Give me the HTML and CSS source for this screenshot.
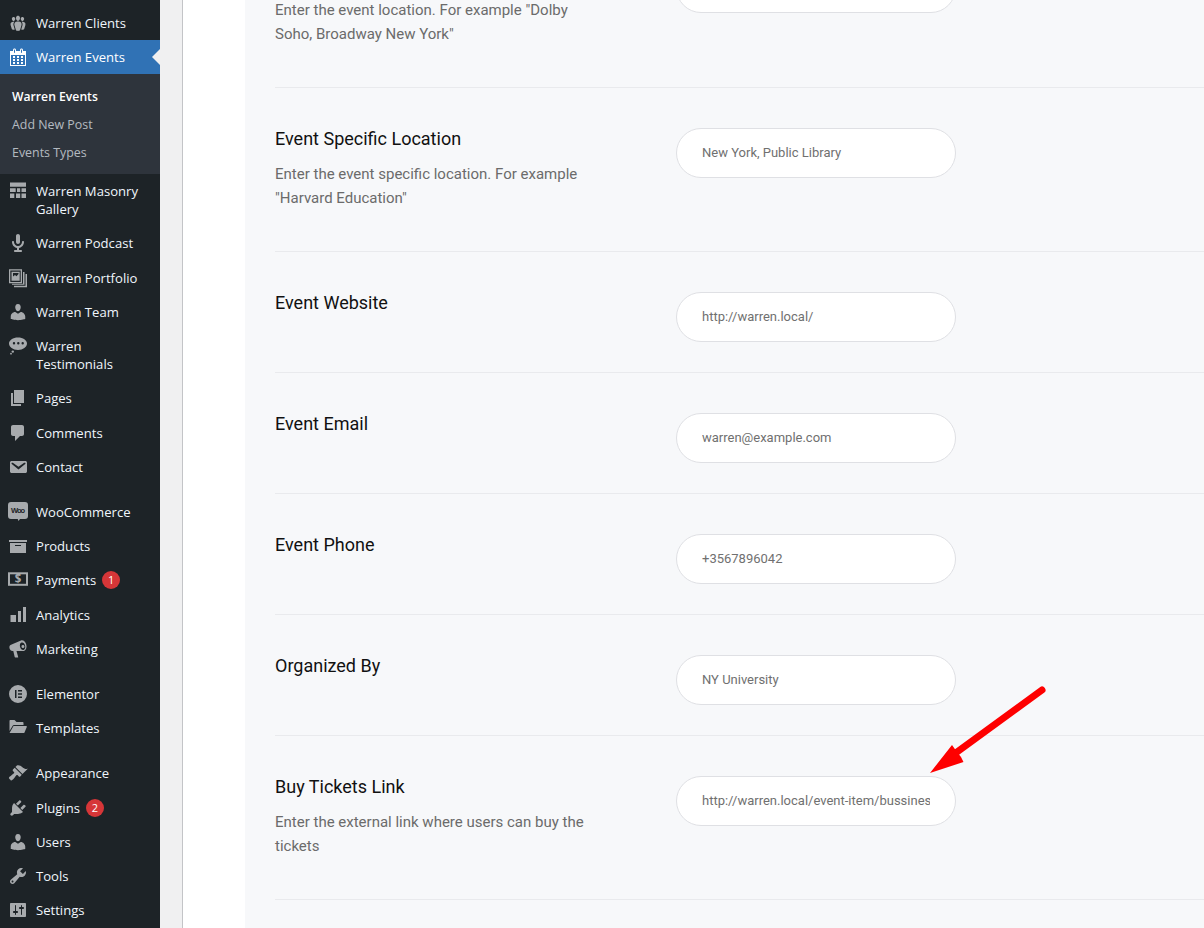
FILE: index.html
```html
<!DOCTYPE html>
<html lang="en">
<head>
<meta charset="utf-8">
<title>Warren Events</title>
<link rel="stylesheet" href="styles.css">
</head>
<body>
<div class="app">
  <nav class="sidebar">
    <ul class="menu">
      <li class="item"><svg class="ico" viewBox="0 0 20 20"><path d="M8.03 4.46c-.29 1.28.55 3.46 1.97 3.46 1.41 0 2.25-2.18 1.96-3.46-.22-.98-1.08-1.63-1.96-1.63-.89 0-1.74.65-1.97 1.63zm-4.13.9c-.25 1.08.47 2.93 1.67 2.93s1.92-1.85 1.67-2.93c-.19-.83-.92-1.39-1.67-1.39s-1.48.56-1.67 1.39zm8.86 0c-.25 1.08.47 2.93 1.66 2.93 1.2 0 1.92-1.85 1.67-2.93-.19-.83-.92-1.39-1.67-1.39-.74 0-1.47.56-1.66 1.39zm-.59 11.43l1.25-4.3C14.2 10 12.71 8.47 10 8.47c-2.72 0-4.21 1.53-3.44 4.02l1.26 4.3C8.05 17.51 9 18 10 18c.98 0 1.94-.49 2.17-1.21zm-6.1-7.63c-.49.67-.96 1.83-.42 3.59l1.12 3.79c-.34.2-.77.31-1.2.31-.85 0-1.65-.41-1.85-1.03l-1.07-3.65c-.65-2.11.61-3.4 2.92-3.4.27 0 .54.02.79.06-.1.1-.2.22-.29.33zm8.35-.39c2.31 0 3.58 1.29 2.92 3.4l-1.07 3.65c-.2.62-1 1.03-1.85 1.03-.43 0-.86-.11-1.2-.31l1.11-3.79c.55-1.76.08-2.92-.42-3.59-.09-.11-.18-.23-.28-.33.25-.04.51-.06.79-.06z"/></svg><span class="label">Warren Clients</span></li>
      <li class="item current"><svg class="ico" viewBox="0 0 20 20"><path d="M15 4h3v15H2V4h3V3c0-.41.15-.76.44-1.06.29-.29.65-.44 1.06-.44s.77.15 1.06.44c.29.3.44.65.44 1.06v1h4V3c0-.41.15-.76.44-1.06.29-.29.65-.44 1.06-.44s.77.15 1.06.44c.29.3.44.65.44 1.06v1zM6 3v2.5c0 .14.05.26.15.36.09.09.21.14.35.14s.26-.05.35-.14c.1-.1.15-.22.15-.36V3c0-.14-.05-.26-.15-.35-.09-.1-.21-.15-.35-.15s-.26.05-.35.15c-.1.09-.15.21-.15.35zm7 0v2.5c0 .14.05.26.14.36.1.09.22.14.36.14s.26-.05.36-.14c.09-.1.14-.22.14-.36V3c0-.14-.05-.26-.14-.35-.1-.1-.22-.15-.36-.15s-.26.05-.36.15c-.09.09-.14.21-.14.35zm4 15V8H3v10h14zM7 9v2H5V9h2zm2 0h2v2H9V9zm4 2V9h2v2h-2zm-6 1v2H5v-2h2zm2 0h2v2H9v-2zm4 2v-2h2v2h-2zm-6 1v2H5v-2h2zm4 2H9v-2h2v2zm4 0h-2v-2h2v2z"/></svg><span class="label">Warren Events</span></li>
      <li class="submenu">
        <a class="sub on">Warren Events</a>
        <a class="sub">Add New Post</a>
        <a class="sub">Events Types</a>
      </li>
      <li class="item"><svg class="ico" viewBox="0 0 20 20"><path d="M2 1.500h16v4.200H2zM2 7.300h5.700v3.700H2zM9 7.300h3.200v3.700H9zM13.500 7.300H18v3.700h-4.500zM2 12.500h4.300V17H2zM8 12.500h4.200V17H8zM13.500 12.500H18V17h-4.500z"/></svg><span class="label">Warren Masonry Gallery</span></li>
      <li class="item"><svg class="ico" viewBox="0 0 20 20"><path d="M12 9V3c0-1.1-.89-2-2-2-1.12 0-2 .94-2 2v6c0 1.1.9 2 2 2 1.13 0 2-.94 2-2zm4 0c0 2.97-2.16 5.43-5 5.91V17h2c.56 0 1 .45 1 1s-.44 1-1 1H7c-.55 0-1-.45-1-1s.45-1 1-1h2v-2.09C6.17 14.43 4 11.97 4 9c0-.55.45-1 1-1 .56 0 1 .45 1 1 0 2.21 1.8 4 4 4 2.21 0 4-1.79 4-4 0-.55.45-1 1-1 .56 0 1 .45 1 1z"/></svg><span class="label">Warren Podcast</span></li>
      <li class="item"><svg class="ico" viewBox="0 0 20 20"><path fill-rule="evenodd" d="M1 1.300h13v14H1zM2.300 2.600v11.400h10.400V2.600zM3.500 3.800h8.200v9H3.500zM5 5v3.500l2-1.500 1.500 1.300L10.500 6V5z"/><path d="M15 4h1.500v12.700H4v-1h11zM17.500 6H19v13.300H6v-1.500h11.500z"/></svg><span class="label">Warren Portfolio</span></li>
      <li class="item"><svg class="ico" viewBox="0 0 20 20"><path d="M10 9.250c-2.270 0-2.730-3.440-2.730-3.440C7 4.020 7.820 2 9.970 2c2.160 0 2.980 2.020 2.710 3.810 0 0-.41 3.440-2.680 3.440zm0 2.570L12.720 10c2.390 0 4.520 2.330 4.520 4.530v2.490s-3.650 1.130-7.240 1.130c-3.650 0-7.240-1.130-7.240-1.130v-2.490c0-2.250 1.940-4.480 4.470-4.480z"/></svg><span class="label">Warren Team</span></li>
      <li class="item"><svg class="ico" viewBox="0 0 20 20"><path fill-rule="evenodd" d="M10 1.500c5 0 9 2.700 9 6.100S15 14 10 14c-5 0-9-3-9-6.400S5 1.500 10 1.500zM6 6.100a1.200 1.200 0 1 0 0 2.400 1.200 1.200 0 0 0 0-2.400zm4.300 0a1.200 1.200 0 1 0 0 2.400 1.200 1.200 0 0 0 0-2.400zm4.400 0a1.200 1.200 0 1 0 0 2.400 1.200 1.200 0 0 0 0-2.400z"/><circle cx="4.800" cy="15.600" r="1.200"/><circle cx="3" cy="17.700" r=".9"/></svg><span class="label">Warren Testimonials</span></li>
      <li class="item"><svg class="ico" viewBox="0 0 20 20"><path d="M6 15V2h10v13H6zm-1 1h8v2H3V5h2v11z"/></svg><span class="label">Pages</span></li>
      <li class="item"><svg class="ico" viewBox="0 0 20 20"><path d="M5 2h9c1.100 0 2 .9 2 2v7c0 1.100-.9 2-2 2h-2l-5 5v-5H5c-1.100 0-2-.9-2-2V4c0-1.100.9-2 2-2z"/></svg><span class="label">Comments</span></li>
      <li class="item"><svg class="ico" viewBox="0 0 20 20"><path d="M3.870 4h13.250C18.370 4 19 4.590 19 5.790v8.420c0 1.190-.63 1.790-1.880 1.790H3.870c-1.250 0-1.880-.6-1.880-1.790V5.790c0-1.200.63-1.790 1.880-1.790zm6.620 8.600l6.740-5.530c.24-.2.43-.66.13-1.070-.29-.41-.82-.42-1.170-.17l-5.700 3.860L4.800 5.830c-.35-.25-.88-.24-1.170.17-.3.41-.11.87.13 1.070z"/></svg><span class="label">Contact</span></li>
      <li class="sep"></li>
      <li class="item"><svg class="ico" viewBox="0 0 20 20"><path d="M3 0h14a3 3 0 0 1 3 3v11a3 3 0 0 1-3 3h-5l-1.500 2-.8-2H3a3 3 0 0 1-3-3V3a3 3 0 0 1 3-3z"/><text class="woo" x="10" y="11" text-anchor="middle" textLength="14">Woo</text></svg><span class="label">WooCommerce</span></li>
      <li class="item"><svg class="ico" viewBox="0 0 20 20"><path d="M19 4v2H1V4h18zM2 7h16v10H2V7zm11 3V9H7v1h6z"/></svg><span class="label">Products</span></li>
      <li class="item"><svg class="ico" viewBox="0 0 20 20"><rect class="outline" x="1" y="3.300" width="18" height="11.500"/><text class="dollar" x="10" y="13" text-anchor="middle">$</text></svg><span class="label">Payments</span><span class="badge">1</span></li>
      <li class="item"><svg class="ico" viewBox="0 0 20 20"><path d="M18 2v15h-3V2h3zm-5 4v11h-3V6h3zM8 10v7H2.500v-7H5z"/></svg><span class="label">Analytics</span></li>
      <li class="item"><svg class="ico" viewBox="0 0 20 20"><path fill-rule="evenodd" d="M13 1.500c2.400-.7 4.600 1.500 5.300 4.300.7 2.700-.2 5.500-2.300 6.200-.3.100-.5.100-.8.100L8.500 12l1.700 6c.1.400-.1.600-.5.600H7.300c-.3 0-.5-.2-.6-.5L5.300 12H4.500C3 12 1.900 10.800 1.500 9.200 1.100 7.600 1.700 6.200 3 5.700zM13.600 3.500c-1.500.4-2.100 2.300-1.500 4.400.6 2.100 2.100 3.400 3.500 3s2.100-2.300 1.500-4.400-2.100-3.400-3.500-3zM14.500 6a1.500 1.500 0 1 0 .9 2.900 1.500 1.500 0 0 0-.9-2.900z"/></svg><span class="label">Marketing</span></li>
      <li class="sep"></li>
      <li class="item"><svg class="ico" viewBox="0 0 20 20"><path fill-rule="evenodd" d="M10 1a9 9 0 1 1 0 18 9 9 0 0 1 0-18zM7 6v8h1.500V6zm3 0v1.500h4V6zm0 3.200v1.600h4V9.200zm0 3.300V14h4v-1.500z"/></svg><span class="label">Elementor</span></li>
      <li class="item"><svg class="ico" viewBox="0 0 20 20"><path d="M1.500 13V3c0-.6.400-1 1-1h4l2 2h6c.6 0 1 .4 1 1v2H6c-.6 0-1 .3-1.300.8zM5.500 8H18c.6 0 1 .5.800 1L16.500 14.500c-.2.400-.5.600-1 .6H1.500z"/></svg><span class="label">Templates</span></li>
      <li class="sep"></li>
      <li class="item"><svg class="ico" viewBox="0 0 20 20"><path d="M14.480 11.060L7.410 3.990l1.500-1.500c.5-.56 2.300-.47 3.510.32 1.210.8 1.430 1.280 2.910 2.100 1.180.64 2.450 1.260 4.450.85zm-.71.71L6.700 4.700 4.930 6.470c-.39.39-.39 1.020 0 1.410l1.060 1.060c.39.39.39 1.030 0 1.420-.6.6-1.430 1.110-2.210 1.690-.35.26-.7.53-1.010.84C1.430 13.230.4 14.910 1.100 15.600c.21.21.95.94 1.570 1.560.74.74 2.190-.49 3.190-1.650.33-.33.54-.62.81-.97.58-.78 1.090-1.600 1.680-2.200.39-.39 1.020-.39 1.410 0l1.060 1.060c.39.39 1.020.39 1.410 0z"/></svg><span class="label">Appearance</span></li>
      <li class="item"><svg class="ico" viewBox="0 0 20 20"><path d="M13.110 4.360L9.870 7.600 8 5.730l3.240-3.240c.35-.34 1.050-.2 1.560.32.52.51.66 1.210.31 1.550zm-8 1.770l.91-1.120 9.010 9.010-1.190.84c-.71.71-2.630 1.160-3.820 1.160H6.140L4.900 17.260c-.59.59-1.540.59-2.120 0-.59-.58-.59-1.530 0-2.120l1.240-1.240v-3.880c0-1.130.4-3.190 1.090-3.890zm7.260 3.970l3.240-3.240c.34-.35 1.040-.21 1.550.31.52.51.66 1.210.31 1.550l-3.240 3.250z"/></svg><span class="label">Plugins</span><span class="badge">2</span></li>
      <li class="item"><svg class="ico" viewBox="0 0 20 20"><path d="M10 9.250c-2.270 0-2.730-3.440-2.730-3.440C7 4.020 7.820 2 9.970 2c2.160 0 2.980 2.020 2.710 3.810 0 0-.41 3.440-2.680 3.440zm0 2.570L12.720 10c2.390 0 4.520 2.330 4.520 4.530v2.490s-3.650 1.130-7.240 1.130c-3.650 0-7.240-1.130-7.240-1.130v-2.490c0-2.250 1.940-4.480 4.470-4.480z"/></svg><span class="label">Users</span></li>
      <li class="item"><svg class="ico" viewBox="0 0 20 20"><path d="M16.680 9.770c-1.340 1.340-3.300 1.670-4.950.99l-5.410 6.520c-.99.99-2.590.99-3.580 0s-.99-2.59 0-3.570l6.520-5.420c-.68-1.650-.35-3.610.99-4.950 1.280-1.280 3.120-1.620 4.720-1.060l-2.890 2.890 2.820 2.820 2.860-2.870c.53 1.580.18 3.390-1.080 4.650zM3.810 16.210c.4.39 1.040.39 1.430 0 .4-.4.4-1.040 0-1.430-.39-.4-1.030-.4-1.430 0-.39.39-.39 1.030 0 1.430z"/></svg><span class="label">Tools</span></li>
      <li class="item"><svg class="ico" viewBox="0 0 20 20"><path d="M18 16V4c0-.55-.45-1-1-1H3c-.55 0-1 .45-1 1v12c0 .55.45 1 1 1h14c.55 0 1-.45 1-1zM8 11h1c.55 0 1 .45 1 1s-.45 1-1 1H8v1.500c0 .28-.22.5-.5.5s-.5-.22-.5-.5V13H6c-.55 0-1-.45-1-1s.45-1 1-1h1V5.500c0-.28.22-.5.5-.5s.5.22.5.5V11zm5-2h-1c-.55 0-1-.45-1-1s.45-1 1-1h1V5.500c0-.28.22-.5.5-.5s.5.22.5.5V7h1c.55 0 1 .45 1 1s-.45 1-1 1h-1v5.500c0 .28-.22.5-.5.5s-.5-.22-.5-.5V9z"/></svg><span class="label">Settings</span></li>
    </ul>
  </nav>
  <div class="gutter"></div>
  <main class="content">
    <div class="panel">
      <section class="row first">
        <div class="info">
          <h3 class="title">Event Location</h3>
          <p class="desc">Enter the event location. For example "Dolby Soho, Broadway New York"</p>
        </div>
        <input class="field" type="text" value="Dolby Soho, Broadway New York">
      </section>
      <section class="row">
        <div class="info">
          <h3 class="title">Event Specific Location</h3>
          <p class="desc">Enter the event specific location. For example "Harvard Education"</p>
        </div>
        <input class="field" type="text" value="New York, Public Library">
      </section>
      <section class="row">
        <div class="info"><h3 class="title">Event Website</h3></div>
        <input class="field" type="text" value="http://warren.local/">
      </section>
      <section class="row">
        <div class="info"><h3 class="title">Event Email</h3></div>
        <input class="field" type="text" value="warren@example.com">
      </section>
      <section class="row">
        <div class="info"><h3 class="title">Event Phone</h3></div>
        <input class="field" type="text" value="+3567896042">
      </section>
      <section class="row">
        <div class="info"><h3 class="title">Organized By</h3></div>
        <input class="field" type="text" value="NY University">
      </section>
      <section class="row">
        <div class="info">
          <h3 class="title">Buy Tickets Link</h3>
          <p class="desc">Enter the external link where users can buy the tickets</p>
        </div>
        <input class="field" type="text" value="http://warren.local/event-item/bussiness-conference/">
      </section>
    </div>
  </main>
</div>
<svg class="arrow" viewBox="0 0 1204 928" aria-hidden="true">
  <path class="shaft" d="M1042 690 L957 752"/>
  <path class="head" d="M930 773 L952 745 L957 752 L961 757 L963.500 762 Z"/>
</svg>
</body>
</html>
```
FILE: styles.css
```css
* { box-sizing: border-box; }
html, body {
  margin: 0;
  height: 928px;
  overflow: hidden;
  background: #f0f0f1;
}
.app {
  display: flex;
  height: 928px;
  overflow: hidden;
}

/* admin menu */
.sidebar {
  flex: 0 0 160px;
  height: 928px;
  background: #1d2327;
  padding-top: 6px;
  font-family: "Open Sans", "Noto Sans", sans-serif;
  font-size: 13.1px;
  color: #f0f6fc;
}
.menu { list-style: none; margin: 0; padding: 0; }
.item {
  position: relative;
  display: block;
  padding: 8px 8px 8px 36px;
  line-height: 18.2px;
}
.ico {
  position: absolute;
  left: 8px;
  top: 7px;
  width: 20px;
  height: 20px;
  fill: #a7aaad;
}
.current { background: #3072b5; color: #fff; }
.current .ico { fill: #fff; }
.current::after {
  content: "";
  position: absolute;
  right: 0;
  top: 9px;
  border: 8px solid transparent;
  border-right-color: #f0f0f1;
  border-left-width: 0;
}
.submenu {
  background: #2e343c;
  padding: 8.6px 0 6.4px;
  font-size: 12.4px;
}
.sub {
  display: block;
  padding: 5px 12px;
  line-height: 18.2px;
  color: rgba(240, 246, 252, .7);
}
.sub.on { color: #fff; font-weight: 600; font-size: 12.2px; }
.sep { height: 11px; }
.badge {
  display: inline-block;
  width: 18px;
  height: 18px;
  margin-left: 6px;
  border-radius: 50%;
  background: #d63638;
  color: #fff;
  font-size: 11px;
  line-height: 18px;
  text-align: center;
  vertical-align: top;
}
.woo { font: 700 7.5px "Liberation Sans", sans-serif; fill: #1d2327; }
.dollar { font: 700 11.5px "Open Sans", sans-serif; fill: #a7aaad; }
.outline { fill: none; stroke: #a7aaad; stroke-width: 2; }

/* page frame */
.gutter {
  flex: 0 0 23px;
  background: #f0f0f1;
  border-right: 1px solid #c3c4c7;
}
.content {
  flex: 1 1 auto;
  min-width: 0;
  background: #fff;
  padding-left: 62px;
}
.panel {
  background: #f7f8fa;
  padding-left: 30px;
  margin-top: -77px;
  height: 1005px;
  font-family: Roboto, sans-serif;
}

/* form rows */
.row {
  display: grid;
  grid-template-columns: 320px 280px;
  column-gap: 81px;
  align-items: start;
  padding: 40px 0 30px;
  border-top: 1px solid #e9eaed;
}
.row:last-child { border-bottom: 1px solid #e9eaed; }
.first .field { margin-top: -1px; }
.title {
  margin: 0;
  font-size: 18px;
  font-weight: 400;
  line-height: 22px;
  color: #111;
}
.desc {
  margin: 12px 0 11px;
  font-size: 15px;
  line-height: 24px;
  color: #6b6b6b;
}
.field {
  display: block;
  width: 280px;
  height: 50px;
  padding: 0 25px 2px;
  border: 1px solid #dfe0e4;
  border-radius: 25px;
  background: #fff;
  font-family: Roboto, sans-serif;
  font-size: 13px;
  color: #707070;
  outline: none;
}

/* annotation */
.arrow {
  position: absolute;
  left: 0;
  top: 0;
  width: 1204px;
  height: 928px;
  pointer-events: none;
}
.shaft { fill: none; stroke: #fe0000; stroke-width: 7; stroke-linecap: round; }
.head { fill: #fe0000; }
```
